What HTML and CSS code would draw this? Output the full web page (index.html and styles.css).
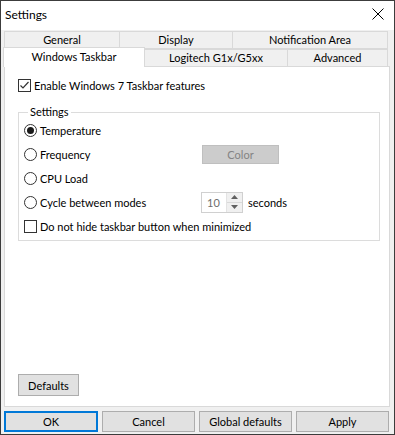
FILE: index.html
```html
<!DOCTYPE html>
<html lang="en">
<head>
    <meta charset="UTF-8">
    <title>Settings</title>
    <link rel="stylesheet" href="styles.css">
</head>
<body>
    <div class="window">

        <!-- Title bar -->
        <div class="titlebar">
            <span class="title">Settings</span>
            <svg class="close" width="12" height="12" viewBox="0 0 12 12">
                <path d="M0.5 0.5 L11.5 11.5 M11.5 0.5 L0.5 11.5" stroke="#000" stroke-width="1" fill="none"/>
            </svg>
        </div>

        <!-- Tabs -->
        <div class="tabrow row-top">
            <div class="tab t-general">General</div>
            <div class="tab t-display">Display</div>
            <div class="tab t-notify">Notification Area</div>
        </div>
        <div class="tabrow row-bottom">
            <div class="tab t-taskbar selected">Windows Taskbar</div>
            <div class="tab t-logitech">Logitech G1x/G5xx</div>
            <div class="tab t-advanced">Advanced</div>
        </div>

        <!-- Tab page -->
        <div class="panel">
            <label class="option top-option">
                <span class="checkbox checked">
                    <svg width="11" height="11" viewBox="0 0 11 11">
                        <path d="M1.5 5.5 L4 8 L9.5 2" stroke="#333" stroke-width="1.2" fill="none"/>
                    </svg>
                </span>
                Enable Windows 7 Taskbar features
            </label>

            <fieldset class="group">
                <legend>Settings</legend>
                <div class="group-rows">
                    <div class="grow">
                        <label class="option"><span class="radio on"></span>Temperature</label>
                    </div>
                    <div class="grow">
                        <label class="option"><span class="radio"></span>Frequency</label>
                        <button class="color-btn" disabled>Color</button>
                    </div>
                    <div class="grow">
                        <label class="option"><span class="radio"></span>CPU Load</label>
                    </div>
                    <div class="grow">
                        <label class="option"><span class="radio"></span>Cycle between modes</label>
                        <div class="spin-wrap">
                            <div class="spinner">
                                <span class="spin-value">10</span>
                                <div class="spin-buttons">
                                    <span class="spin-up">
                                        <svg width="7" height="4" viewBox="0 0 7 4"><path d="M0 4 L3.5 0 L7 4 Z" fill="#606060"/></svg>
                                    </span>
                                    <span class="spin-down">
                                        <svg width="7" height="4" viewBox="0 0 7 4"><path d="M0 0 L3.5 4 L7 0 Z" fill="#606060"/></svg>
                                    </span>
                                </div>
                            </div>
                            <span>seconds</span>
                        </div>
                    </div>
                    <div class="grow">
                        <label class="option wide"><span class="checkbox"></span>Do not hide taskbar button when minimized</label>
                    </div>
                </div>
            </fieldset>

            <div class="panel-footer">
                <button class="btn defaults-btn">Defaults</button>
            </div>
        </div>

        <!-- Dialog buttons -->
        <div class="dialog-buttons">
            <button class="btn dlg-btn default">OK</button>
            <button class="btn dlg-btn">Cancel</button>
            <button class="btn dlg-btn">Global defaults</button>
            <button class="btn dlg-btn">Apply</button>
        </div>
    </div>
</body>
</html>
```

FILE: styles.css
```css
/* General styles */
body {
    margin: 0;
    padding: 0;
    font-family: Lato, "Noto Sans", sans-serif;
    font-size: 11px;
    color: #000;
}

/* Window */
.window {
    width: 395px;
    height: 435px;
    box-sizing: border-box;
    border: 1px solid #3c3c3c;
    background-color: #f0f0f0;
    display: flex;
    flex-direction: column;
}

.titlebar {
    height: 29px;
    background-color: #fff;
    display: flex;
    align-items: center;
    padding: 0 10px 3px 4px;
    box-sizing: border-box;
    font-size: 12px;
}

.title {
    flex: 1;
}

/* Tabs */
.tabrow {
    display: flex;
    padding-left: 3px;
}

.row-top {
    margin-top: 1px;
    height: 18px;
}

.row-bottom {
    height: 17px;
    align-items: flex-end;
}

.tab {
    box-sizing: border-box;
    border: 1px solid #d9d9d9;
    background-color: #f0f0f0;
    margin-left: -1px;
    text-align: center;
    line-height: 16px;
    white-space: nowrap;
}

.row-top .tab:first-child {
    margin-left: 0;
}

.row-bottom .tab {
    height: 17px;
    border-bottom: none;
}

.t-general { width: 116px; }
.t-display { width: 114px; }
.t-notify { width: 156px; }
.t-taskbar { width: 142px; }
.t-logitech { width: 144px; }
.t-advanced { width: 101px; }

.row-bottom .tab.selected {
    height: 20px;
    margin-bottom: -1px;
    background-color: #fff;
    line-height: 17px;
    position: relative;
    z-index: 1;
}

/* Tab page */
.panel {
    margin: 0 4px 0 3px;
    height: 341px;
    box-sizing: border-box;
    border: 1px solid #d9d9d9;
    background-color: #fff;
    padding: 6px 8px 10px 13px;
    display: flex;
    flex-direction: column;
}

.option {
    display: flex;
    align-items: center;
    height: 24px;
    white-space: nowrap;
}

.option.wide {
    grid-column: 1 / span 2;
}

.checkbox {
    flex-shrink: 0;
    width: 13px;
    height: 13px;
    box-sizing: border-box;
    border: 1px solid #333;
    background-color: #fff;
    margin-right: 3px;
    display: flex;
    align-items: center;
    justify-content: center;
}

.radio {
    flex-shrink: 0;
    width: 13px;
    height: 13px;
    box-sizing: border-box;
    border: 1px solid #333;
    border-radius: 50%;
    background-color: #fff;
    margin-right: 3px;
    display: flex;
    align-items: center;
    justify-content: center;
}

.radio.on::after {
    content: "";
    width: 7px;
    height: 7px;
    border-radius: 50%;
    background-color: #1a1a1a;
}

/* Group box */
.group {
    margin: 7px 0 0 0;
    width: 362px;
    box-sizing: border-box;
    border: 1px solid #dcdcdc;
    padding: 0 5px 2px 5px;
}

.group legend {
    padding: 0 2px;
    margin-left: 4px;
    line-height: 16px;
}

.group-rows {
    margin-top: -2px;
}

.grow {
    display: grid;
    grid-template-columns: 177px auto;
    align-items: center;
    height: 24px;
}

.color-btn {
    width: 77px;
    height: 19px;
    margin-left: 1px;
    padding: 0;
    font-family: inherit;
    font-size: 11px;
    background-color: #cccccc;
    border: 1px solid #bfbfbf;
    color: #838383;
}

.spin-wrap {
    display: flex;
    align-items: center;
}

.spinner {
    width: 42px;
    height: 21px;
    box-sizing: border-box;
    border: 1px solid #d0d0d0;
    display: flex;
    margin-right: 5px;
}

.spin-value {
    flex: 1;
    color: #6d6d6d;
    padding-left: 5px;
    line-height: 19px;
}

.spin-buttons {
    width: 15px;
    display: flex;
    flex-direction: column;
    border-left: 1px solid #e3e3e3;
}

.spin-up,
.spin-down {
    flex: 1;
    display: flex;
    align-items: center;
    justify-content: center;
    background-color: #f0f0f0;
}

.spin-up {
    border-bottom: 1px solid #d9d9d9;
}

/* Buttons */
.panel-footer {
    margin-top: auto;
}

.btn {
    font-family: inherit;
    font-size: 11px;
    color: #000;
    background-color: #e1e1e1;
    border: 1px solid #adadad;
    padding: 0;
    box-sizing: border-box;
}

.defaults-btn {
    width: 61px;
    height: 22px;
}

.dialog-buttons {
    display: flex;
    gap: 4px;
    padding: 4px 0 0 3px;
}

.dlg-btn {
    width: 93px;
    height: 21px;
}

.dlg-btn.default {
    width: 94px;
    border: 2px solid #0078d7;
}
```
